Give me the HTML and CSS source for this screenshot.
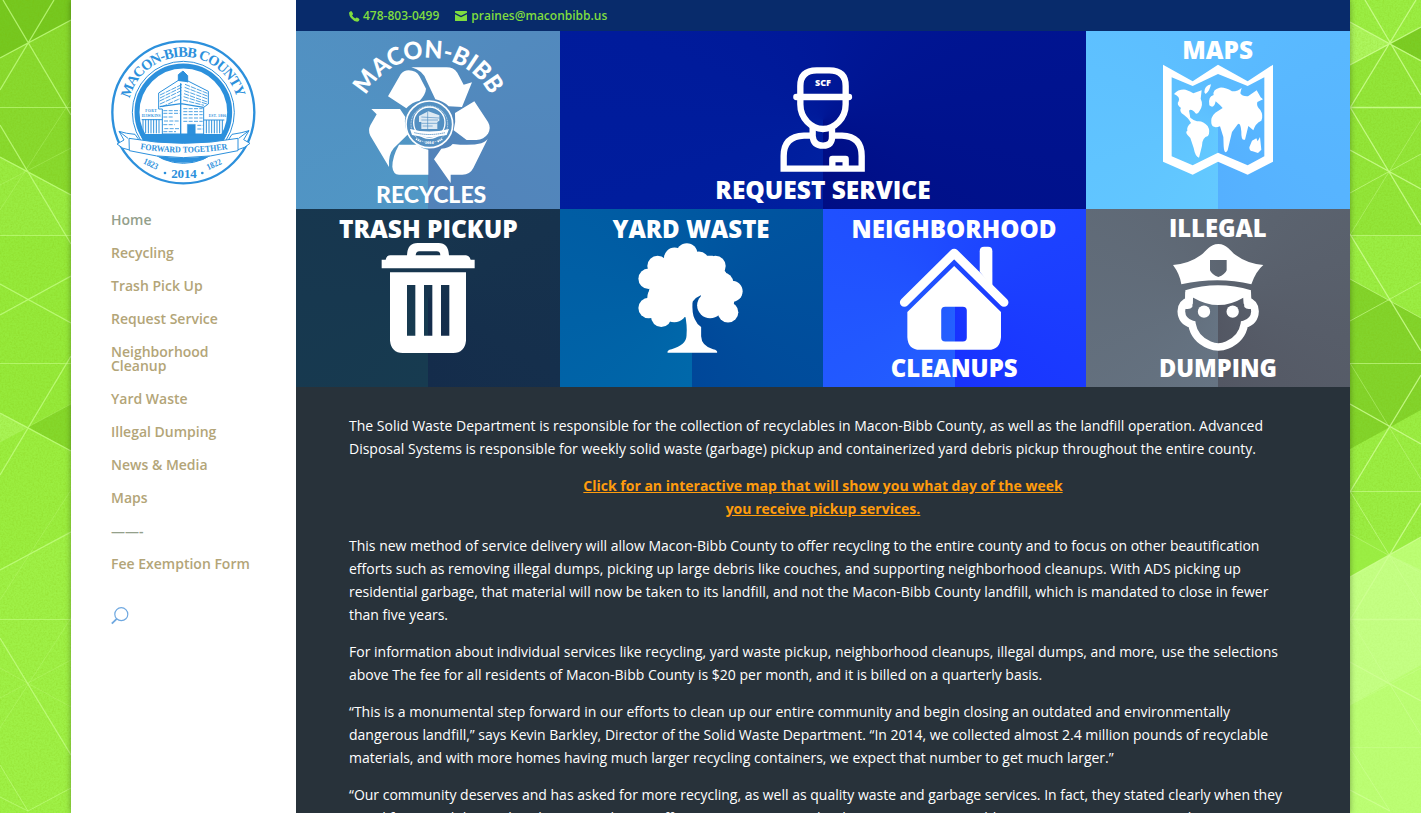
FILE: index.html
```html
<!DOCTYPE html>
<html lang="en">
<head>
<meta charset="utf-8">
<title>Macon-Bibb County Solid Waste Department</title>
<link rel="stylesheet" href="styles.css">
</head>
<body>
<svg width="0" height="0" class="defs">
  <defs>
    <filter id="grain" x="0" y="0" width="100%" height="100%">
      <feTurbulence type="fractalNoise" baseFrequency="0.55" numOctaves="2" seed="4"/>
      <feColorMatrix values="0 0 0 0 0.2  0 0 0 0 0.45  0 0 0 0 0  0.9 0.6 0 0 -0.6"/>
    </filter>
  </defs>
</svg>
<div class="layout">
  <svg class="strip" viewBox="0 0 71 813" preserveAspectRatio="none">
    <rect width="71" height="813" fill="#96ea3b"/>
    <path d="M0 0H71V20L0 58Z" fill="#76c820"/>
    <path d="M0 58L71 20V195L28 171L0 157Z" fill="#89da2f"/>
    <path d="M0 157L28 171L71 195V236H0Z" fill="#9aec42"/>
    <path d="M0 413L28 427L0 442Z" fill="#a8f456"/>
    <path d="M28 427L71 404V451Z" fill="#85d82c"/>
    <path d="M0 442L28 427L71 451V530L0 570Z" fill="#9bee40"/>
    <path d="M0 570L71 530V813H0Z" fill="#9ff147"/>
    <rect width="71" height="813" filter="url(#grain)" opacity=".36"/>
    <g fill="none" stroke="#c6ff86">
      <path d="M0 58L71 20M0 90L54 0M3 0L71 115M0 125L71 244M0 157L71 195M0 284L71 323M0 315L71 276M0 413L71 451M0 475L71 356M0 570L71 532M0 638L71 755" stroke-opacity=".75" stroke-width="1.3"/>
      <path d="M0 107.500H71M0 235.500H71M0 363.500H71M0 619.500H71M0 765L28 811M0 797L28 811L71 788" stroke-opacity=".6"/>
      <path d="M0 185L71 148M0 210L71 100M0 442L71 404M0 600L71 490M0 668L71 707M0 698L71 660M0 728L71 618" stroke-opacity=".3"/>
    </g>
  </svg>
  <div class="page">
    <aside class="side">
      <svg class="seal" viewBox="33 30 435 435" fill="none" stroke="#2c90dc">
        <defs>
          <path id="sealTop" d="M89 206A166 166 0 0 1 411 206"/>
          <path id="ribbon" d="M121 357Q250 378 385 357"/>
        </defs>
        <circle cx="250" cy="247" r="213" stroke-width="7"/>
        <circle cx="250" cy="247" r="153" stroke-width="3"/>
        <circle cx="250" cy="247" r="139" stroke-width="15"/>
        <path d="M120 312H380Q350 398 250 398T120 312Z" fill="#2c90dc" stroke="none"/>
        <path d="M176 189L240 148L258 150L325 184V222L311 232V312H187V237H176Z" fill="#fff" stroke-width="3"/>
        <path d="M235 153V134L249 123L263 137V157" fill="#2c90dc" stroke-width="3"/>
        <g stroke-width="2.500">
          <path d="M180 195L247 163M180 204L245 172M179 213L244 182M180 222L244 193M187 230L244 204M255 163L322 190M254 172L324 199M253 182L323 207M252 191L322 216M251 200L321 222M249 210L312 226" stroke-dasharray="16 3"/>
          <path d="M190 242H239M190 250H239M190 261H222M192 273H237M190 284H224M193 296H237M190 305H228M250 236H308M250 245H308M250 254H308M250 264H308M250 274H308M292 286H310M292 297H310" stroke-dasharray="12 4"/>
          <path d="M242 160V312M179 230L243 221L311 232" stroke-width="4"/>
          <path d="M125 269H187M129 268V310M137 268V310M145 268V310M153 268V310M161 268V310M169 268V310M177 268V310M311 270H373M319 270V310M327 270V310M335 270V310M343 270V310M351 270V310M359 270V310M367 270V310" stroke-width="3"/>
        </g>
        <path d="M262 283H286V314H262Z" fill="#2c90dc"/>
        <path d="M84 325L57 304Q78 311 105 313L118 331M416 325L447 302Q425 309 396 313L384 331M57 304L72 330L51 342Q67 358 89 360M447 302L431 329L450 340Q434 355 414 359" fill="#fff" stroke-width="3"/>
        <path d="M87 325Q250 355 414 325V362Q250 404 88 362Z" fill="#fff" stroke-width="3"/>
        <g fill="#2c90dc" stroke="none" class="serif">
          <text font-size="43"><textPath href="#sealTop" textLength="436">MACON-BIBB COUNTY</textPath></text>
          <text font-size="26"><textPath href="#ribbon" textLength="263" lengthAdjust="spacingAndGlyphs">FORWARD TOGETHER</textPath></text>
          <text x="136" y="246" font-size="11" textLength="34">FORT</text>
          <text x="125" y="260" font-size="11" textLength="57">HAWKINS</text>
          <text x="326" y="260" font-size="11" textLength="52">EST. 1806</text>
          <text x="214" y="443" font-size="39" textLength="76">2014</text>
          <text transform="translate(128 400) rotate(25)" font-size="27" textLength="46" lengthAdjust="spacingAndGlyphs">1823</text>
          <text transform="translate(325 421) rotate(-25)" font-size="27" textLength="46" lengthAdjust="spacingAndGlyphs">1822</text>
          <circle cx="195" cy="429" r="4"/><circle cx="307" cy="429" r="4"/>
        </g>
      </svg>
      <nav class="menu">
        <a class="current">Home</a>
        <a>Recycling</a>
        <a>Trash Pick Up</a>
        <a>Request Service</a>
        <a>Neighborhood<br>Cleanup</a>
        <a>Yard Waste</a>
        <a>Illegal Dumping</a>
        <a>News &amp; Media</a>
        <a>Maps</a>
        <a class="current">——-</a>
        <a>Fee Exemption Form</a>
      </nav>
      <svg class="search" viewBox="0 0 18 18" fill="none" stroke="#6fa8e0"><circle cx="10.300" cy="7.200" r="6.500" stroke-width="1.200"/><path d="M5.700 11.800L.8 16.700" stroke-width="1.800"/></svg>
    </aside>
    <main class="main">
      <header class="topbar">
        <svg class="phone" viewBox="0 0 11 11"><path d="M.3 1.300L2 .1Q3 .1 4 2.700Q4.200 3.400 3 4.200Q3.800 6.200 6.300 7.500Q7.300 6.300 8 6.600Q10.400 7.600 10.500 8.500Q10.200 10.600 8.300 10.700Q4.500 10.200 2 7T.3 1.300Z" fill="#7fdc3f"/></svg>
        <span class="number">478-803-0499</span>
        <svg class="mail" viewBox="0 0 12 10"><path d="M0 .6Q0 0 .6 0H11.400Q12 0 12 .6V1.700L6 4.800L0 1.700ZM0 3.200L6 6.300L12 3.200V9.400Q12 10 11.400 10H.6Q0 10 0 9.400Z" fill="#7fdc3f"/></svg>
        <span>praines@maconbibb.us</span>
      </header>
      <section class="tiles">
        <a class="tile recycles">
          <svg viewBox="0 0 792 534"><g transform="translate(0 -93)" fill="#fff">
            <path id="arch" d="M210 287A211 211 0 0 1 584 287" fill="none"/>
            <text class="lato" font-size="73"><textPath href="#arch" textLength="458" lengthAdjust="spacingAndGlyphs">MACON-BIBB</textPath></text>
            <path d="M276 289L314 223Q323 211 338 211Q361 212 370 228L390 266Q389 283 371 302Q348 306 331 325Z"/>
            <path d="M346 202H452Q473 202 484 218L503 254L528 247L498 321L458 319Q440 302 418 298L391 241Q381 211 346 202Z"/>
            <path d="M477 339L535 304L576 366Q586 383 576 401Q564 418 541 420H512L473 391Q480 365 477 339Z"/>
            <path d="M578 411L532 504Q522 524 499 524H464V549L414 478L436 446Q459 445 470 432Q525 438 556 430Q574 423 578 411Z"/>
            <path d="M226 327H312L328 351Q323 376 336 403L293 445Q276 465 279 501L223 407Q215 392 223 376L242 343Z"/>
            <path d="M309 434H365Q378 446 397 449V524H309Q291 523 289 500Q289 470 309 434Z"/>
            <circle cx="400" cy="373" r="70" fill="#5390c2" stroke="#fff" stroke-width="5"/>
            <circle cx="400" cy="373" r="55" fill="none" stroke="#fff" stroke-width="2" stroke-dasharray="3 2"/>
            <circle cx="400" cy="368" r="47" fill="none" stroke="#fff" stroke-width="4"/>
            <path d="M369 348L397 334L430 346V362L424 366V387H376V366H369Z" opacity=".8"/>
            <path d="M395 335V390M376 351L430 354M376 360H426M376 370H424M380 378H410" stroke="#5390c2" stroke-width="2"/>
            <path d="M342 387Q400 402 459 387L452 405Q400 418 348 405Z"/>
            <path d="M355 398Q400 409 447 398" fill="none" stroke="#5390c2" stroke-width="3" stroke-dasharray="4 2"/>
            <text x="387" y="432" font-size="13" class="serif" textLength="26">2014</text>
            <path d="M360 417L375 425M425 425L440 417" stroke="#fff" stroke-width="5" stroke-dasharray="4 2"/>
            <text class="lato" x="240" y="608" font-size="69" textLength="331" lengthAdjust="spacingAndGlyphs">RECYCLES</text>
          </g></svg>
        </a>
        <a class="tile request">
          <svg viewBox="0 0 1578 534"><g transform="translate(420 0)" fill="none" stroke="#fff" stroke-width="19">
            <path d="M301 196V165Q301 118 350 118H388Q437 118 437 165V220C437 262 404 294 369 294S301 262 301 220V196"/>
            <path d="M289 198H447" stroke-linecap="round"/>
            <path d="M338 290V315Q340 344 369 344T396 315V290"/>
            <path d="M334 314H312Q251 316 251 375V413H485V375Q485 316 426 314H401"/>
            <path d="M397 413V384H437V413" stroke-linejoin="round"/><path d="M407 388H428V393H407Z" fill="#fff" stroke="none"/>
            <g fill="#fff" stroke="none"><text x="345" y="164" font-size="28" textLength="48" lengthAdjust="spacingAndGlyphs">SCF</text>
            <text x="46" y="504" font-size="74" textLength="646" lengthAdjust="spacingAndGlyphs">REQUEST SERVICE</text></g>
          </g></svg>
        </a>
        <a class="tile maps">
          <svg viewBox="0 0 792 534" fill="#fff">
            <text x="289" y="85" font-size="74" textLength="212" lengthAdjust="spacingAndGlyphs">MAPS</text>
            <path fill-rule="evenodd" d="M231 101L320 151L396 101L485 151L561 101V392L485 431L396 392L320 431L231 392ZM257 139V376L320 403L396 365L485 403L535 376V139L485 165L396 129L320 165Z"/>
            <path d="M264 189Q277 174 299 176Q314 181 322 187L347 178L344 203Q353 221 341 239Q332 256 325 242Q314 232 309 239L313 260Q321 267 333 271Q350 268 365 285Q374 301 366 315Q349 318 348 344L339 380Q328 378 323 351L313 321Q294 303 304 299Q301 287 315 276Q307 260 287 247Q280 237 285 231Q270 220 278 211Q284 198 264 189ZM355 184Q355 164 375 160Q371 181 359 189Z"/>
            <path d="M370 223Q365 196 383 192Q379 176 401 170Q417 168 438 181Q458 181 467 170L463 187Q468 197 486 196L512 178L524 199L531 205L514 213Q510 226 523 237Q533 253 526 269Q508 277 502 298L487 285L477 326Q465 330 466 302Q463 267 452 284L438 303L425 358Q415 374 413 346L412 318L402 286Q379 294 376 277Q373 258 388 245L410 231Q401 221 389 211Q384 235 370 223ZM490 349L498 329L511 322L515 331L522 318L526 356L516 366L500 361Q490 361 490 349Z"/>
          </svg>
        </a>
        <a class="tile trash">
          <svg viewBox="0 0 792 534" fill="#fff">
            <text x="129" y="86" font-size="74" textLength="536" lengthAdjust="spacingAndGlyphs">TRASH PICKUP</text>
            <path fill-rule="evenodd" d="M257 152H269Q272 139 283 139H333Q334 102 365 102H428Q457 102 459 139H510Q520 140 524 152H536V178H257ZM359 139H433Q433 127 422 127H370Q360 127 359 139Z"/>
            <path fill-rule="evenodd" d="M282 190H510V395Q506 431 472 432H320Q286 431 282 395ZM333 228V380H358V228ZM384 228V380H409V228ZM435 228V380H460V228Z"/>
          </svg>
        </a>
        <a class="tile yard">
          <svg viewBox="0 0 792 534" fill="#fff">
            <text x="158" y="86" font-size="74" textLength="473" lengthAdjust="spacingAndGlyphs">YARD WASTE</text>
            <circle cx="382" cy="134" r="32"/><circle cx="345" cy="147" r="32"/><circle cx="294" cy="171" r="31"/><circle cx="267" cy="209" r="31"/><circle cx="267" cy="297" r="31"/><circle cx="305" cy="323" r="31"/><circle cx="344" cy="300" r="40"/><circle cx="418" cy="158" r="31"/><circle cx="468" cy="171" r="31"/><circle cx="491" cy="221" r="31"/><circle cx="518" cy="247" r="32"/><circle cx="506" cy="310" r="31"/><circle cx="452" cy="289" r="39"/><circle cx="490" cy="280" r="34"/><circle cx="296" cy="265" r="33"/>
            <path d="M280 185L330 140H460L500 190L510 280H430L424 259Q409 265 399 278L385 325L310 320L265 260Z"/>
            <path d="M375 310L399 275Q397 317 406 331Q412 346 425 354V382Q426 411 461 421Q476 424 473 432H324Q321 424 336 421Q380 409 381 381Q384 349 375 310Z"/>
          </svg>
        </a>
        <a class="tile neighborhood">
          <svg viewBox="0 0 792 534" fill="#fff">
            <text x="86" y="86" font-size="74" textLength="617" lengthAdjust="spacingAndGlyphs">NEIGHBORHOOD</text>
            <path d="M245 280L395 132L545 280" fill="none" stroke="#fff" stroke-width="27" stroke-linecap="round" stroke-linejoin="round"/>
            <path d="M472 188V126Q472 113 485 113H497Q510 113 510 126V235Z"/>
            <path fill-rule="evenodd" d="M395 171L536 309V385Q533 423 498 423H292Q256 423 254 385V309ZM368 293Q356 293 356 305V386Q356 398 368 398H421Q433 398 433 386V305Q433 293 421 293Z"/>
            <text x="204" y="504" font-size="74" textLength="382" lengthAdjust="spacingAndGlyphs">CLEANUPS</text>
          </svg>
        </a>
        <a class="tile illegal">
          <svg viewBox="0 0 792 534" fill="#fff">
            <text x="249" y="84" font-size="74" textLength="293" lengthAdjust="spacingAndGlyphs">ILLEGAL</text>
            <path fill-rule="evenodd" d="M261 168Q310 164 345 138C362 126 371 105 397 105S432 126 449 138Q484 164 532 168Q510 186 496 226Q396 202 286 226Q282 196 261 168ZM372 153V184Q377 197 397 204Q417 197 422 184V153Z"/>
            <path d="M298 244Q396 214 495 244L487 264L472 266Q397 310 322 266L306 264Z"/>
            <path d="M310 245L309 276Q286 283 286 307Q287 337 318 346Q325 389 370 408Q397 420 424 408Q468 389 475 346Q506 337 507 307Q507 283 484 276L483 245" fill="none" stroke="#fff" stroke-width="23"/>
            <path d="M298 248H322L319 294Q312 303 296 299ZM495 248H471L475 294Q482 303 497 299Z"/>
            <circle cx="354" cy="308" r="18.500"/><circle cx="440" cy="308" r="18.500"/>
            <text x="219" y="504" font-size="74" textLength="354" lengthAdjust="spacingAndGlyphs">DUMPING</text>
          </svg>
        </a>
      </section>
      <article class="copy">
        <p>The Solid Waste Department is responsible for the collection of recyclables in Macon-Bibb County, as well as the landfill operation. Advanced<br>Disposal Systems is responsible for weekly solid waste (garbage) pickup and containerized yard debris pickup throughout the entire county.</p>
        <p class="link"><a>Click for an interactive map that will show you what day of the week<br>you receive pickup services.</a></p>
        <p>This new method of service delivery will allow Macon-Bibb County to offer recycling to the entire county and to focus on other beautification<br>efforts such as removing illegal dumps, picking up large debris like couches, and supporting neighborhood cleanups. With ADS picking up<br>residential garbage, that material will now be taken to its landfill, and not the Macon-Bibb County landfill, which is mandated to close in fewer<br>than five years.</p>
        <p>For information about individual services like recycling, yard waste pickup, neighborhood cleanups, illegal dumps, and more, use the selections<br>above The fee for all residents of Macon-Bibb County is $20 per month, and it is billed on a quarterly basis.</p>
        <p>“This is a monumental step forward in our efforts to clean up our entire community and begin closing an outdated and environmentally<br>dangerous landfill,” says Kevin Barkley, Director of the Solid Waste Department. “In 2014, we collected almost 2.4 million pounds of recyclable<br>materials, and with more homes having much larger recycling containers, we expect that number to get much larger.”</p>
        <p>“Our community deserves and has asked for more recycling, as well as quality waste and garbage services. In fact, they stated clearly when they<br>voted for consolidation that they wanted more efficient government and a cleaner, more sustainable community,” says Mayor Robert</p>
      </article>
    </main>
  </div>
  <svg class="strip" viewBox="0 0 71 813" preserveAspectRatio="none">
    <rect width="71" height="813" fill="#9bee44"/>
    <path d="M0 22L40 44L0 65Z" fill="#adf65e"/>
    <path d="M40 44L71 27V60Z" fill="#7bcd25"/>
    <path d="M0 65L40 44L71 60V236H0Z" fill="#93e63a"/>
    <path d="M0 279L71 318V410L0 449Z" fill="#83d42c"/>
    <path d="M0 577L71 537V813H0Z" fill="#bcfe74"/>
    <path d="M0 577L40 555L71 570V665L0 705Z" fill="#c4ff84"/>
    <rect width="71" height="540" filter="url(#grain)" opacity=".36"/>
    <rect y="540" width="71" height="273" filter="url(#grain)" opacity=".1"/>
    <g fill="none" stroke="#cfff95">
      <path d="M0 22L71 61M0 65L71 27M0 108L66 0M15 0L71 95M0 107.500H71M0 107L71 225M0 150L71 189M0 234L71 351M0 404L71 444M0 492L71 375M0 577L71 537M0 620L71 503M0 619.500H71M0 662L71 701M0 790L40 811" stroke-opacity=".8" stroke-width="1.300"/>
      <path d="M0 193L71 154M0 235.500H71M0 321L71 282M0 363.500H71M0 491.500H71M0 491L71 607M0 619L71 735M0 748L40 811M0 279L71 318" stroke-opacity=".6"/>
      <path d="M0 235L71 120M0 363L71 479M0 534L71 573M0 705L71 668M0 747.500H71" stroke-opacity=".4"/>
    </g>
  </svg>
</div>
</body>
</html>
```
FILE: styles.css
```css
* { box-sizing: border-box; }
body { margin: 0; height: 813px; overflow: hidden; font-family: "Open Sans", "Noto Sans", sans-serif; font-size: 14px; }
.defs { display: block; }
.layout { display: grid; grid-template-columns: 71px 1279px 71px; height: 813px; }
.strip { width: 71px; height: 813px; display: block; }
.page { display: grid; grid-template-columns: 225px 1054px; height: 813px; box-shadow: 0 0 6px rgba(0, 0, 0, .35); z-index: 1; }
.side { background: #fff; padding: 40px 0 0 40px; }
.seal { display: block; width: 145px; height: 145px; margin-bottom: 28px; }
.serif { font-family: "Liberation Serif", serif; font-weight: bold; }
.menu { display: flex; flex-direction: column; gap: 19px; font-weight: 600; line-height: 14px; color: #b3a578; }
.menu .current { color: #94a08b; }
.search { display: block; width: 18px; height: 18px; margin-top: 36px; }
.main { background: #28323a; height: 813px; overflow: hidden; }
.topbar { display: flex; align-items: center; height: 31px; padding-left: 53px; background: #082b6b; color: #7fdc3f; font-size: 12px; font-weight: 600; white-space: nowrap; }
.phone { width: 11px; height: 11px; margin: 2px 3px 0 0; }
.number { margin-right: 16px; }
.mail { width: 12px; height: 10px; margin-right: 4px; }
.tiles { display: grid; grid-template-columns: 264px 263px 263px 264px; grid-template-rows: 178px 178px; }
.tile { display: block; overflow: hidden; }
.tile svg { display: block; width: 100%; height: 178px; font-weight: 800; }
.recycles { background: conic-gradient(from 180deg, #5098c6, #528dc0 50%, #5282b9); }
.request { grid-column: span 2; background: conic-gradient(from 180deg, #0020a0, #001898 50%, #000d84); }
.maps { background: conic-gradient(from 180deg, #63c9ff, #5bbcff 50%, #55b0ff); }
.trash { background: conic-gradient(from 180deg, #173b50, #17354e 50%, #142c4b); }
.yard { background: conic-gradient(from 180deg, #0068aa, #0058a1 50%, #004799); }
.neighborhood { background: conic-gradient(from 180deg, #2460ff, #1e49ff 50%, #1832ff); }
.illegal { background: conic-gradient(from 180deg, #667483, #5d6672 50%, #535763); }
.lato { font-family: Lato, "Open Sans", sans-serif; font-weight: 900; }
.copy { padding: 27px 53px 0; color: #fff; line-height: 23px; white-space: nowrap; }
.copy p { margin: 0 0 14px; }
.copy .link { text-align: center; color: #ff9c0d; font-weight: 700; }
.link a { text-decoration: underline; }
```
